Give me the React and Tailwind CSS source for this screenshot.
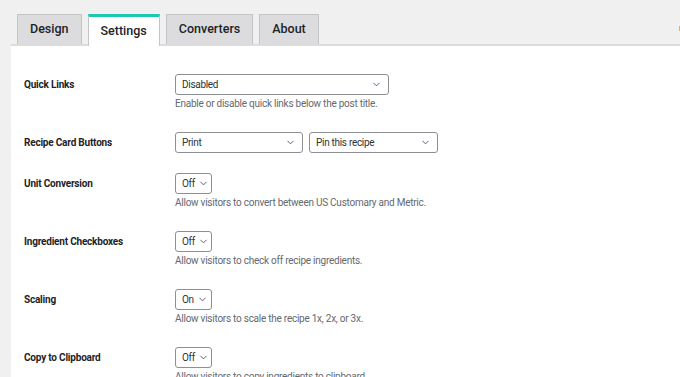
import { ChevronDown } from 'lucide-react'

const font = { fontFamily: 'Roboto, "Noto Sans", sans-serif' }

function Tab({ children, active }) {
  if (active) {
    return (
      <div className="h-[32px] px-[12px] bg-white border-t-[3px] border-t-[#1cc7b4] border-x border-x-[#c3c4c7] flex items-center text-[12.5px] font-medium text-[#1d2327] -mb-[2px] relative">
        {children}
      </div>
    )
  }
  return (
    <div className="h-[30px] px-[12px] bg-[#dcdcde] border border-b-0 border-[#c3c4c7] flex items-center text-[12.5px] font-medium text-[#1d2327]">
      {children}
    </div>
  )
}

function Select({ value, width }) {
  return (
    <div
      className={`h-[21px] ${width} border border-[#8c8f94] rounded-[3px] bg-white flex items-center pl-[6px] pr-[6px] text-[10px] tracking-[-0.3px] text-[#2c3338] gap-[3px]`}
    >
      <span className="flex-1 leading-none">{value}</span>
      <ChevronDown size={11} strokeWidth={2} className="text-[#50575e] shrink-0" />
    </div>
  )
}

function Row({ label, children, desc }) {
  return (
    <div className="flex py-[10px]">
      <div className="w-[151px] shrink-0 text-[10px] tracking-[-0.2px] font-bold text-[#1d2327] leading-[21px]">{label}</div>
      <div className="flex flex-col">
        <div className="flex gap-[6px]">{children}</div>
        {desc && <div className="mt-[1px] text-[10px] tracking-[-0.25px] leading-[16px] text-[#646970]">{desc}</div>}
      </div>
    </div>
  )
}

export default function App() {
  return (
    <div className="w-[680px] h-[377px] overflow-hidden bg-[#f0f0f1] pl-[11px]" style={font}>
      <div className="flex items-end gap-[6px] pl-[6px] pt-[14px] border-b-2 border-[#dcdcde] h-[46px]">
        <Tab>Design</Tab>
        <Tab active>Settings</Tab>
        <Tab>Converters</Tab>
        <Tab>About</Tab>
        <div className="ml-auto self-start mt-[12px] w-[1px] h-[5px] bg-[#e0b070]" />
      </div>
      <div className="bg-white pt-[18px] pl-[13px] h-full">
        <Row label="Quick Links" desc="Enable or disable quick links below the post title.">
          <Select value="Disabled" width="w-[214px]" />
        </Row>
        <Row label="Recipe Card Buttons">
          <Select value="Print" width="w-[128px]" />
          <Select value="Pin this recipe" width="w-[129px]" />
        </Row>
        <Row label="Unit Conversion" desc="Allow visitors to convert between US Customary and Metric.">
          <Select value="Off" width="w-[37px]" />
        </Row>
        <Row label="Ingredient Checkboxes" desc="Allow visitors to check off recipe ingredients.">
          <Select value="Off" width="w-[37px]" />
        </Row>
        <Row label="Scaling" desc="Allow visitors to scale the recipe 1x, 2x, or 3x.">
          <Select value="On" width="w-[37px]" />
        </Row>
        <Row label="Copy to Clipboard" desc="Allow visitors to copy ingredients to clipboard.">
          <Select value="Off" width="w-[37px]" />
        </Row>
      </div>
    </div>
  )
}
